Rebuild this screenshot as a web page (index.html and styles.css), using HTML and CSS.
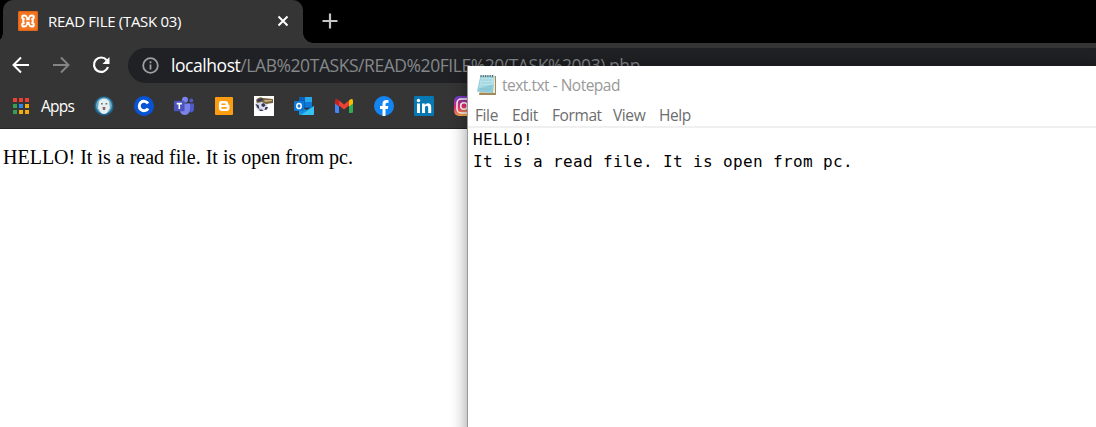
FILE: index.html
```html
<!DOCTYPE html>
<html lang="en">
<head>
<meta charset="utf-8">
<title>READ FILE (TASK 03)</title>
<link rel="stylesheet" href="styles.css">
</head>
<body>
<div class="browser">
  <div class="tabstrip">
    <div class="tab">
      <svg class="favicon" width="20" height="20" viewBox="0 0 20 20"><rect width="20" height="20" rx="1.500" fill="#f37623"/><rect x=".7" y=".7" width="18.600" height="18.600" rx="1" fill="none" stroke="#d95f12" stroke-width=".8"/><g fill="none" stroke-linecap="round" stroke-linejoin="round"><path d="M6 6.300Q8 6.300 7.500 8.500L7 10l.5 1.500Q8 13.700 6 13.700M14 6.300Q12 6.300 12.500 8.500L13 10l-.5 1.500Q12 13.700 14 13.700M7 10h6" stroke="#fff" stroke-width="5.600"/><path d="M6 6.300Q8 6.300 7.500 8.500L7 10l.5 1.500Q8 13.700 6 13.700M14 6.300Q12 6.300 12.500 8.500L13 10l-.5 1.500Q12 13.700 14 13.700M7 10h6" stroke="#f37623" stroke-width="1.600"/><path d="M10 2.500v3M10 14.500v3" stroke="#f37623" stroke-width="1.500"/></g></svg>
      <span class="tab-title">READ FILE (TASK 03)</span>
      <svg class="close" width="12" height="12" viewBox="0 0 12 12"><path d="M1.500 1.500l9 9M10.500 1.500l-9 9" stroke="#fff" stroke-width="2"/></svg>
    </div>
    <svg class="newtab" width="16" height="16" viewBox="0 0 16 16"><path d="M8 .5v15M.5 8h15" stroke="#c4c4c4" stroke-width="2.200"/></svg>
  </div>
  <div class="toolbar">
    <svg width="18" height="18" viewBox="0 0 18 18"><path d="M17 9H2M9 1.500L1.500 9 9 16.500" fill="none" stroke="#fff" stroke-width="2"/></svg>
    <svg width="18" height="18" viewBox="0 0 18 18"><path d="M1 9h15M9 1.500L16.500 9 9 16.500" fill="none" stroke="#858585" stroke-width="1.900"/></svg>
    <svg width="18" height="18" viewBox="0 0 18 18"><path d="M14.800 4.200A7.200 7.200 0 1 0 16 11" fill="none" stroke="#fff" stroke-width="2.200"/><path d="M17.500 1v7h-7z" fill="#fff"/></svg>
    <div class="omnibox">
      <svg width="17" height="17" viewBox="0 0 17 17"><circle cx="8.500" cy="8.500" r="7.300" fill="none" stroke="#9aa0a6" stroke-width="1.800"/><path d="M8.500 7.500v5M8.500 4.300v1.900" stroke="#9aa0a6" stroke-width="1.800"/></svg>
      <span class="url"><span class="host">localhost</span><span class="path">/LAB%20TASKS/READ%20FILE%20(TASK%2003).php</span></span>
    </div>
  </div>
  <div class="bookmarks">
    <svg class="apps" width="18" height="18" viewBox="0 0 18 18"><path d="M1 1h4v4H1zM7 1h4v4H7zM13 1h4v4h-4z" fill="#e94235"/><path d="M1 7h4v4H1zM1 13h4v4H1z" fill="#34a053"/><path d="M7 7h4v4H7z" fill="#2a87f0"/><path d="M13 7h4v4h-4zM7 13h4v4H7zM13 13h4v4h-4z" fill="#f5ab0b"/></svg>
    <span class="apps-label">Apps</span>
    <div class="icons">
      <svg width="20" height="20" viewBox="0 0 20 20"><circle cx="10" cy="10" r="9.700" fill="#226489"/><circle cx="10" cy="9.500" r="8" fill="#69a9ca"/><path d="M5 5q5-5 10 0l1 7-3 5q-3 2-6 0l-3-5z" fill="#e4eff1"/><path d="M7 7h1.800v1.400H7zM11.500 7h1.800v1.400h-1.800z" fill="#7b7770"/><path d="M8.500 11h3l-.5 3H9z" fill="#8c6059"/></svg>
      <svg width="20" height="20" viewBox="0 0 20 20"><circle cx="10" cy="10" r="10" fill="#0753d5"/><path d="M14 7.600A4.700 4.700 0 1 0 14 12.400" fill="none" stroke="#fff" stroke-width="3"/></svg>
      <svg width="20" height="20" viewBox="0 0 20 20"><circle cx="11" cy="3.700" r="3" fill="#7b83eb"/><circle cx="17.300" cy="4.500" r="2" fill="#5059c9"/><path d="M14 7.500h6v5.800q-.6 3.500-4 3.300z" fill="#5059c9"/><path d="M6 7.500h10v6.500q-1 5-5.200 5-4 0-4.800-4z" fill="#7b83eb"/><rect y="4.700" width="10.500" height="10.500" rx="1" fill="#4b53bc"/><path d="M2.700 7.600h5.200M5.300 7.600v5.400" stroke="#fff" stroke-width="1.600"/></svg>
      <svg width="20" height="20" viewBox="0 0 20 20"><rect x="1" y="1" width="18" height="18" rx="1" fill="#fc9c11"/><path d="M7.700 5h3.500q3 0 3.100 3 0 1 1.200 1.200v2.500q-.1 3.400-3.400 3.400H7.900q-3 0-3-3V8q0-3 2.800-3Z" fill="#fff"/><path d="M8 8.300h3M8 11.900h4.200" stroke="#fc9c11" stroke-width="1.600" stroke-linecap="round"/></svg>
      <svg width="20" height="20" viewBox="0 0 20 20"><path d="M0 0h20v20H0z" fill="#fff"/><circle cx="7.500" cy="9" r="6.200" fill="#dcdce8"/><path d="M2 4q3-4 7-2l10 1v4l-7 1-4-2-5 1z" fill="#756340"/><path d="M3 4l5-2 1 2-5 2zM1.500 8l3 1 1 4-2-1zM7.500 8l2.500-1 1.500 2.500-2 1.500-2-1zM11.500 11l2.500 0-1 2.500-2.500 .5zM5 13.500h3l1.500 1.500h-3.500z" fill="#34355a"/><path d="M10 4h8v1l-7 1z" fill="#c9b174"/></svg>
      <svg width="20" height="20" viewBox="0 0 20 20"><path d="M5 1h13v11H5z" fill="#0a60b5"/><path d="M11 1h7v5h-7z" fill="#28a8ea"/><path d="M5 6h6v5H5z" fill="#0364b8"/><path d="M11 6h7v5h-7z" fill="#0f78d4"/><path d="M5 10l7.500 4L20 10v8q0 1-1 1H6q-1 0-1-1z" fill="#1490df"/><path d="M20 10v8q0 1-1 1H7z" fill="#37c2f1"/><rect y="5" width="10" height="10" rx="1" fill="#0f78d4"/><ellipse cx="5" cy="10" rx="2.200" ry="2.600" fill="none" stroke="#fff" stroke-width="1.500"/></svg>
      <svg width="20" height="20" viewBox="0 0 20 20"><path d="M1 6l4 3v8H2.300Q1 17 1 15.700z" fill="#4285f4"/><path d="M15 9l4-3v9.700q0 1.300-1.300 1.300H15z" fill="#34a853"/><path d="M5 4.500l5 4 5-4v5l-5 4-5-4z" fill="#ea4335"/><path d="M15 4.500q4-3 4 .5v2.500l-4 3z" fill="#fbbc04"/><path d="M5 4.500Q1 1.500 1 5v2.500l4 3z" fill="#c5221f"/></svg>
      <svg width="20" height="20" viewBox="0 0 20 20"><circle cx="10" cy="10" r="10" fill="#1484f3"/><path d="M8.500 20v-7H6v-3h2.500V8q0-4 4-4l2 .2v2.500H13q-1.500 0-1.500 1.600V10h2.800l-.5 3h-2.300v7z" fill="#fff"/></svg>
      <svg width="20" height="20" viewBox="0 0 20 20"><rect width="20" height="20" rx="1.300" fill="#0878b5"/><circle cx="4.500" cy="4.500" r="1.700" fill="#fff"/><path d="M3 7.500h3V17H3zM8 7.500h2.800v1.400q1-1.700 3.100-1.700 3.300 0 3.300 4V17h-3v-5q0-2.200-1.500-2.200-1.700 0-1.700 2.200v5H8z" fill="#fff"/></svg>
      <svg width="20" height="20" viewBox="0 0 20 20"><defs><linearGradient id="ig" x1=".3" y1="0" x2=".5" y2="1"><stop offset="0" stop-color="#6b3ed1"/><stop offset=".5" stop-color="#e52c70"/><stop offset="1" stop-color="#fdb347"/></linearGradient></defs><rect width="20" height="20" rx="5" fill="url(#ig)"/><rect x="3" y="3" width="14" height="14" rx="4" fill="none" stroke="#fff" stroke-width="1.500"/><circle cx="10" cy="10" r="3.300" fill="none" stroke="#fff" stroke-width="1.600"/></svg>
    </div>
  </div>
  <main class="page">HELLO! It is a read file. It is open from pc.</main>
</div>
<section class="notepad">
  <header class="np-title">
    <svg width="22" height="22" viewBox="0 0 22 22"><path d="M6 2h14v19H3z" fill="#a28a58"/><path d="M5 1.500h14V19L2 18.500z" fill="#efe9d8"/><path d="M4.500 1.500H18.500L17 19 1 17.500z" fill="#8fcbd9"/><path d="M5 3.500h13l-.6 7L3 14z" fill="#b9e4ec"/><path d="M5 6h11M4.700 9h11M4.300 12h11M4 15h11" stroke="#82c0d0" stroke-width=".6"/><path d="M5 1v2.200M7.300 1v2.200M9.600 1v2.200M11.900 1v2.200M14.200 1v2.200M16.500 1v2.200" stroke="#586970" stroke-width="1"/></svg>
    <span>text.txt - Notepad</span>
  </header>
  <nav class="np-menu"><span class="m-file">File</span><span class="m-edit">Edit</span><span class="m-format">Format</span><span class="m-view">View</span><span>Help</span></nav>
  <div class="np-text">HELLO!<br>It is a read file. It is open from pc.</div>
</section>
</body>
</html>
```
FILE: styles.css
```css
* { box-sizing: border-box; }
body { margin: 0; width: 1096px; height: 427px; overflow: hidden; position: relative; background: #fff; font-family: "Open Sans", "Noto Sans", sans-serif; }
svg { display: block; flex: none; }
span { white-space: pre; }
.browser { height: 427px; display: flex; flex-direction: column; }
.tabstrip { height: 43px; background: #000; display: flex; padding-left: 3px; }
.tab { width: 300px; height: 43px; background: #353535; border-radius: 10px 10px 0 0; display: flex; align-items: center; padding: 0 14px 1px 15px; position: relative; }
.tab::before, .tab::after { content: ""; position: absolute; bottom: 0; width: 10px; height: 10px; }
.tab::before { left: -10px; background: radial-gradient(circle at 0 0, transparent 9.5px, #353535 10px); }
.tab::after { right: -10px; background: radial-gradient(circle at 100% 0, transparent 9.5px, #353535 10px); }
.tab-title { color: #fff; font-size: 15px; letter-spacing: -.3px; margin: -1px 0 0 10px; }
.close { margin-left: auto; }
.newtab { margin: 13px 0 0 19px; }
.toolbar { height: 44px; background: #353535; display: flex; align-items: center; gap: 22px; padding-left: 12px; }
.omnibox { flex: 1; height: 35px; margin-left: -4px; margin-right: -20px; background: #202124; border-radius: 18px; display: flex; align-items: center; gap: 12px; padding-left: 14px; }
.url { font-size: 17.500px; letter-spacing: -.44px; }
.host { color: #fff; }
.path { color: #85888b; }
.bookmarks { height: 42px; background: #353535; border-bottom: 1px solid #252525; display: flex; align-items: center; padding-left: 12px; padding-bottom: 4px; }
.apps-label { color: #fff; font-size: 15.500px; width: 53px; margin-left: 11px; letter-spacing: -.75px; }
.icons { display: flex; gap: 20px; }
.page { flex: 1; padding: 17px 3px; font: 20px/23px "Liberation Serif", serif; color: #000; }
.notepad { position: absolute; left: 467px; top: 66px; width: 640px; height: 380px; background: #fff; border-left: 1px solid #999; box-shadow: 0 0 16px rgba(0,0,0,.4); }
.np-title { height: 37px; display: flex; align-items: center; gap: 4px; padding-left: 8px; color: #999; font-size: 15.500px; letter-spacing: -.5px; }
.np-menu { height: 25px; display: flex; align-items: center; padding: 0 0 0 7px; border-bottom: 2px solid #f0f0f0; color: #6d6d6d; font-size: 15.500px; letter-spacing: -.4px; }
.m-file { width: 37px; }
.m-edit { width: 40px; }
.m-format { width: 61px; }
.m-view { width: 46px; }
.np-text { padding: 1px 5px; font: 16px/22px "DejaVu Sans Mono", monospace; letter-spacing: .37px; color: #000; }
```
